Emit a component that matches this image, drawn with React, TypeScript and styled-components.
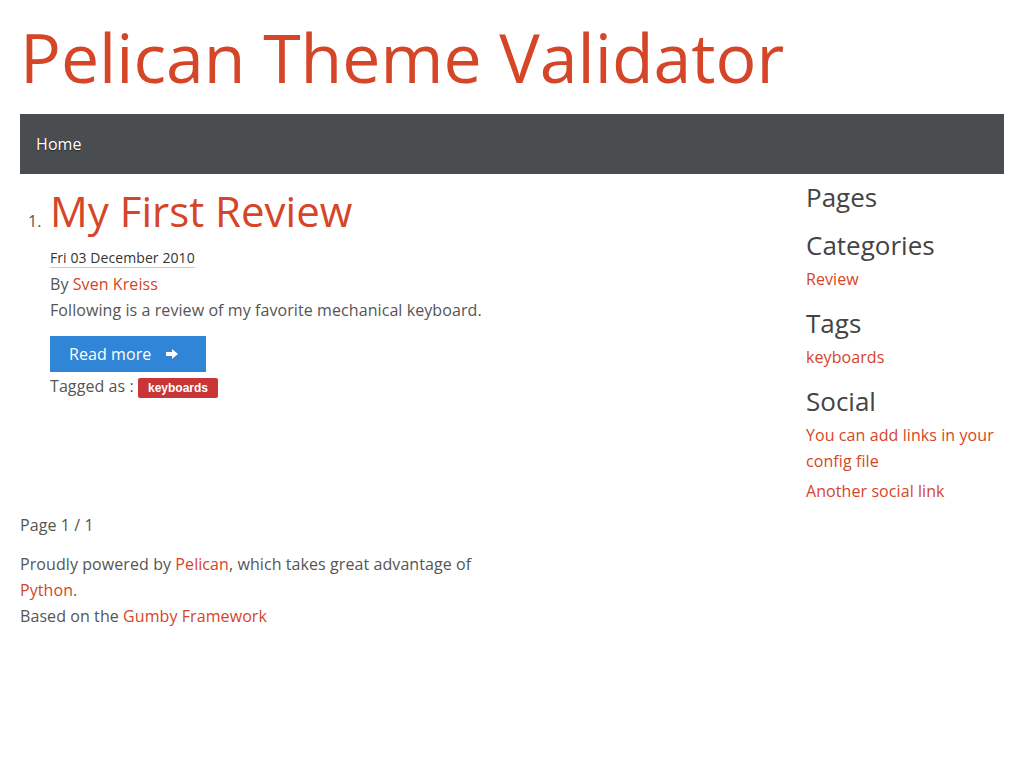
import styled, { createGlobalStyle } from "styled-components";

const GlobalStyle = createGlobalStyle`
  html, body {
    margin: 0;
    padding: 0;
    background: #fff;
  }
  body {
    font-family: "Open Sans", "Liberation Sans", sans-serif;
    font-size: 16px;
    line-height: 26px;
    letter-spacing: 0.08px;
    color: #555;
  }
  * {
    box-sizing: border-box;
  }
`;

const Page = styled.div`
  padding: 0 20px;
`;

const SiteTitle = styled.h1`
  margin: 16px 0 16px;
  font-size: 68px;
  line-height: 82px;
  font-weight: 400;
  letter-spacing: 0;
  color: #d54527;
`;

const NavBar = styled.nav`
  height: 60px;
  background: #4a4d50;
  display: flex;
  align-items: center;
  padding: 0 16px;
`;

const NavLink = styled.a`
  color: #fff;
  font-size: 16px;
  line-height: 58px;
  text-decoration: none;
  text-shadow: 0 1px 1px rgba(0, 0, 0, 0.6);
`;

const Row = styled.div`
  display: flex;
  align-items: flex-start;
`;

const Main = styled.main`
  flex: 1;
  padding-top: 12px;
`;

const PostList = styled.ol`
  margin: 0;
  padding-left: 30px;
  list-style: none;
  counter-reset: post;
`;

const PostItem = styled.li`
  position: relative;
  font-size: 16px;
  counter-increment: post;

  &::before {
    content: counter(post) ".";
    position: absolute;
    left: -22px;
    top: 22px;
    line-height: 26px;
    color: #555;
  }
`;

const PostTitle = styled.h2`
  margin: 0;
  font-size: 42px;
  line-height: 50px;
  font-weight: 400;
  letter-spacing: 0;
  color: #d54527;
`;

const DateLine = styled.p`
  margin: 9px 0 0;
  font-size: 14px;
  line-height: 26px;
  color: #333;
`;

const DateText = styled.abbr`
  text-decoration: none;
  border-bottom: 1px solid #ccc;
`;

const Line = styled.p`
  margin: 0;
`;

const Link = styled.a`
  color: #d54527;
  text-decoration: none;
`;

const ReadMore = styled.a`
  display: inline-flex;
  align-items: center;
  height: 36px;
  margin-top: 13px;
  padding: 0 28px 0 19px;
  background: #3085d6;
  color: #fff;
  font-size: 16px;
  text-decoration: none;

  svg {
    margin-left: 15px;
  }
`;

const Tagged = styled.p`
  margin: 1px 0 0;
`;

const Badge = styled.a`
  display: inline-block;
  padding: 0 10px;
  height: 20px;
  line-height: 20px;
  border-radius: 2px;
  background: #ca3535;
  color: #fff;
  font-family: "Liberation Sans", Arial, sans-serif;
  font-size: 12px;
  font-weight: 700;
  letter-spacing: 0;
  text-decoration: none;
`;

const Sidebar = styled.aside`
  flex: 0 0 198px;
  padding-top: 6px;
`;

const Section = styled.section`
  display: flex;
  flex-direction: column;
  margin-bottom: 10px;

  &:last-child {
    margin-bottom: 0;
  }
`;

const SideHeading = styled.h4`
  margin: 0 0 4px;
  font-size: 26px;
  line-height: 34px;
  font-weight: 400;
  letter-spacing: 0;
  color: #444;
`;

const SideList = styled.ul`
  margin: 0;
  padding: 0;
  list-style: none;

  li {
    margin-bottom: 4px;
  }
`;

const Pager = styled.p`
  margin: 4px 0 0;
`;

const Footer = styled.footer`
  margin-top: 13px;
  max-width: 480px;

  p {
    margin: 0;
  }
`;

const Arrow = () => (
  <svg width="12" height="10" viewBox="0 0 12 10">
    <path d="M0 3h6V0l6 5-6 5V7H0z" fill="#fff" />
  </svg>
);

const sidebar = [
  { title: "Pages", links: [] as string[] },
  { title: "Categories", links: ["Review"] },
  { title: "Tags", links: ["keyboards"] },
  {
    title: "Social",
    links: ["You can add links in your config file", "Another social link"],
  },
];

export default function App() {
  return (
    <>
      <GlobalStyle />
      <Page>
        <SiteTitle>Pelican Theme Validator</SiteTitle>
        <NavBar>
          <NavLink href="#">Home</NavLink>
        </NavBar>
        <Row>
          <Main>
            <PostList>
              <PostItem>
                <PostTitle>My First Review</PostTitle>
                <DateLine>
                  <DateText title="2010-12-03T10:20:00">
                    Fri 03 December 2010
                  </DateText>
                </DateLine>
                <Line>
                  By <Link href="#">Sven Kreiss</Link>
                </Line>
                <Line>
                  Following is a review of my favorite mechanical keyboard.
                </Line>
                <ReadMore href="#">
                  Read more
                  <Arrow />
                </ReadMore>
                <Tagged>
                  Tagged as : <Badge href="#">keyboards</Badge>
                </Tagged>
              </PostItem>
            </PostList>
          </Main>
          <Sidebar>
            {sidebar.map((s) => (
              <Section key={s.title}>
                <SideHeading>{s.title}</SideHeading>
                {s.links.length > 0 && (
                  <SideList>
                    {s.links.map((l) => (
                      <li key={l}>
                        <Link href="#">{l}</Link>
                      </li>
                    ))}
                  </SideList>
                )}
              </Section>
            ))}
          </Sidebar>
        </Row>
        <Pager>Page 1 / 1</Pager>
        <Footer>
          <p>
            Proudly powered by <Link href="#">Pelican</Link>, which takes great
            advantage of <Link href="#">Python</Link>.
          </p>
          <p>
            Based on the <Link href="#">Gumby Framework</Link>
          </p>
        </Footer>
      </Page>
    </>
  );
}
